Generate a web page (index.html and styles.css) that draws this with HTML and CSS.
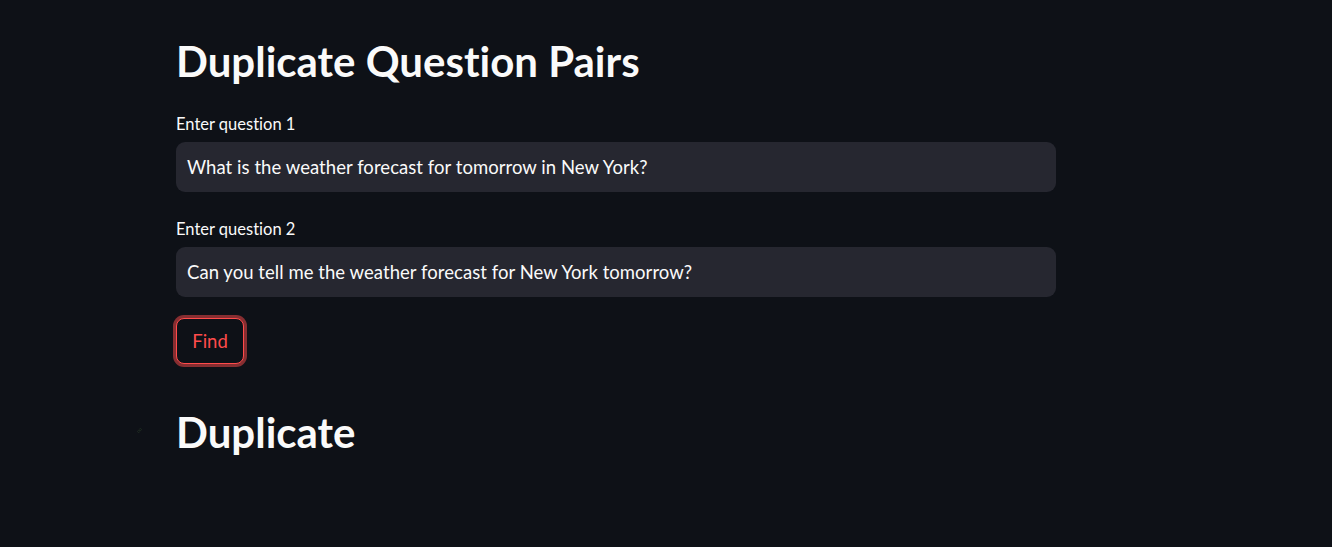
FILE: index.html
```html
<!DOCTYPE html>
<html lang="en">
<head>
<meta charset="utf-8">
<title>Duplicate Question Pairs</title>
<link rel="stylesheet" href="styles.css">
</head>
<body>
<main class="app">
  <div class="block">
    <h1 class="title">Duplicate Question Pairs</h1>
    <div class="field field-first">
      <label class="label">Enter question 1</label>
      <div class="input">What is the weather forecast for tomorrow in New York?</div>
    </div>
    <div class="field">
      <label class="label">Enter question 2</label>
      <div class="input">Can you tell me the weather forecast for New York tomorrow?</div>
    </div>
    <div class="btn-row">
      <button class="btn">Find</button>
    </div>
    <h1 class="result">
      <span class="anchor"><svg viewBox="0 0 24 24" width="5" height="5" fill="none" stroke="#2a3a2a" stroke-width="3"><path d="M10 13a5 5 0 0 0 7 0l3-3a5 5 0 0 0-7-7l-1 1"/><path d="M14 11a5 5 0 0 0-7 0l-3 3a5 5 0 0 0 7 7l1-1"/></svg></span>
      Duplicate
    </h1>
  </div>
</main>
</body>
</html>
```

FILE: styles.css
```css
html, body {
  margin: 0;
  padding: 0;
  background: #0e1117;
  height: 100%;
}
body {
  font-family: "Source Sans Pro", "Lato", "Noto Sans", sans-serif;
  font-variant-ligatures: none;
  color: #fafafa;
}
.app {
  padding-left: 176px;
}
.block {
  width: 880px;
  display: flex;
  flex-direction: column;
}
.title {
  margin: 0;
  padding-top: 37px;
  font-size: 42px;
  line-height: 48px;
  font-weight: 700;
  letter-spacing: 0;
}
.field {
  display: flex;
  flex-direction: column;
  margin-top: 27px;
}
.field-first {
  margin-top: 29px;
}
.label {
  font-size: 16.5px;
  line-height: 20px;
  margin-bottom: 8px;
  letter-spacing: 0;
}
.input {
  height: 50px;
  box-sizing: border-box;
  background: #262730;
  border-radius: 9px;
  padding: 0 11px;
  display: flex;
  align-items: center;
  font-size: 18.5px;
  letter-spacing: 0.05px;
}
.btn-row {
  margin-top: 21px;
  display: flex;
}
.btn {
  font-family: inherit;
  font-variant-ligatures: none;
  width: 68px;
  height: 46px;
  margin-left: 0;
  background: #0e1117;
  color: #ff4b4b;
  border: 1px solid #ff4b4b;
  border-radius: 8px;
  box-shadow: 0 0 0 3px rgba(255, 75, 75, 0.5);
  font-size: 18.5px;
  padding: 0;
}
.result {
  position: relative;
  margin: 0;
  margin-top: 44px;
  font-size: 42px;
  line-height: 48px;
  font-weight: 700;
  letter-spacing: 0;
}
.anchor {
  position: absolute;
  left: -39px;
  top: 20px;
  display: flex;
}
```
